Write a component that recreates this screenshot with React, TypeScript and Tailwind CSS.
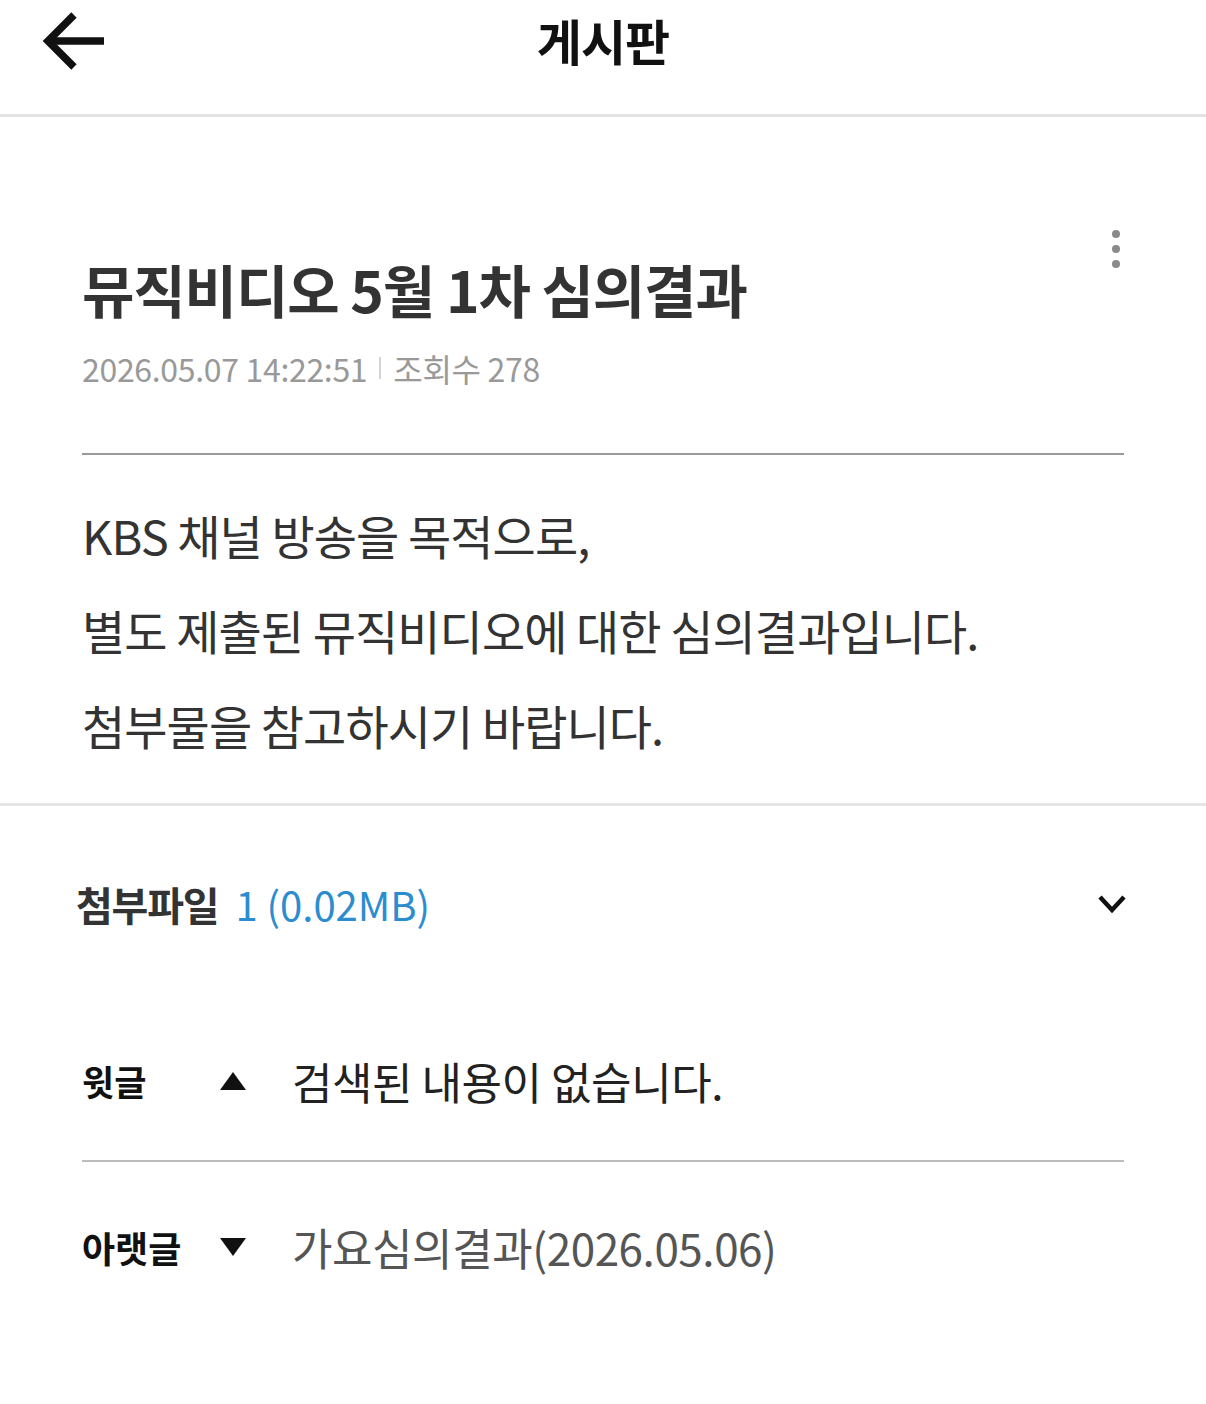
const FONT = "font-['Noto_Sans_CJK_KR','Noto_Sans',sans-serif]";

const BackArrow = () => (
  <svg width="64" height="62" viewBox="0 0 64 62" fill="none" stroke="#111" strokeWidth="7.5" strokeLinecap="butt">
    <path d="M62 29H8" />
    <path d="M32 3L6 29l26 26" />
  </svg>
);

const Triangle = ({ up }: { up: boolean }) => (
  <svg width="28" height="20" viewBox="0 0 28 20" className="shrink-0">
    <polygon points={up ? '14,1 27,19 1,19' : '1,1 27,1 14,19'} fill="#111" />
  </svg>
);

export default function App() {
  return (
    <div className={`min-h-[1404px] w-full bg-white ${FONT}`}>
      {/* top bar */}
      <header className="relative flex h-[117px] items-center justify-center border-b-[3px] border-[#e3e3e3]">
        <button type="button" className="absolute left-[42px] top-[12px]">
          <BackArrow />
        </button>
        <h1 className="mt-[-34px] text-[49px] font-bold tracking-[-0.02em] text-[#111]">게시판</h1>
      </header>

      {/* article */}
      <section className="px-[82px] pt-[137px]">
        <div className="flex items-start justify-between">
          <h2 className="text-[57px] font-bold leading-[68px] tracking-[-0.02em] text-[#333]">
            뮤직비디오 5월 1차 심의결과
          </h2>
          <button type="button" className="mr-[4px] mt-[-24px] flex flex-col gap-[7px]">
            <span className="h-[8px] w-[8px] rounded-full bg-[#8a8a8a]" />
            <span className="h-[8px] w-[8px] rounded-full bg-[#8a8a8a]" />
            <span className="h-[8px] w-[8px] rounded-full bg-[#8a8a8a]" />
          </button>
        </div>
        <div className="mt-[26px] flex items-center text-[32px] leading-[40px] tracking-[-0.01em] text-[#999]">
          <span>2026.05.07 14:22:51</span>
          <span className="mx-[12px] h-[22px] w-[2px] bg-[#d5d5d5]" />
          <span>조회수 278</span>
        </div>
        <div className="mt-[65px] h-[2px] bg-[#9a9a9a]" />
        <div className="pb-[31px] pt-[32px] text-[47px] leading-[95px] tracking-[-0.02em] text-[#333]">
          <p>KBS 채널 방송을 목적으로,</p>
          <p>별도 제출된 뮤직비디오에 대한 심의결과입니다.</p>
          <p>첨부물을 참고하시기 바랍니다.</p>
        </div>
      </section>

      {/* attachments */}
      <section className="flex h-[199px] items-center justify-between border-t-[3px] border-[#e6e6e6] pl-[76px] pr-[80px]">
        <div className="flex items-baseline gap-[17px]">
          <span className="text-[40px] font-bold tracking-[-0.03em] text-[#333]">첨부파일</span>
          <span className="text-[40px] text-[#2b8dcf]">1 (0.02MB)</span>
        </div>
        <svg width="28" height="20" viewBox="0 0 28 20" fill="none" stroke="#111" strokeWidth="4.5">
          <path d="M2 3l12 13L26 3" />
        </svg>
      </section>

      {/* prev / next */}
      <nav className="px-[82px]">
        <div className="flex h-[158px] items-center">
          <span className="w-[137px] text-[35px] font-bold text-[#111]">윗글</span>
          <Triangle up />
          <span className="ml-[45px] text-[44px] tracking-[-0.01em] text-[#222]">검색된 내용이 없습니다.</span>
        </div>
        <div className="h-[2px] bg-[#bcbcbc]" />
        <div className="flex h-[170px] items-center">
          <span className="w-[137px] text-[36px] font-bold text-[#111]">아랫글</span>
          <Triangle up={false} />
          <span className="ml-[45px] text-[44px] tracking-[-0.01em] text-[#555]">가요심의결과(2026.05.06)</span>
        </div>
      </nav>
    </div>
  );
}
